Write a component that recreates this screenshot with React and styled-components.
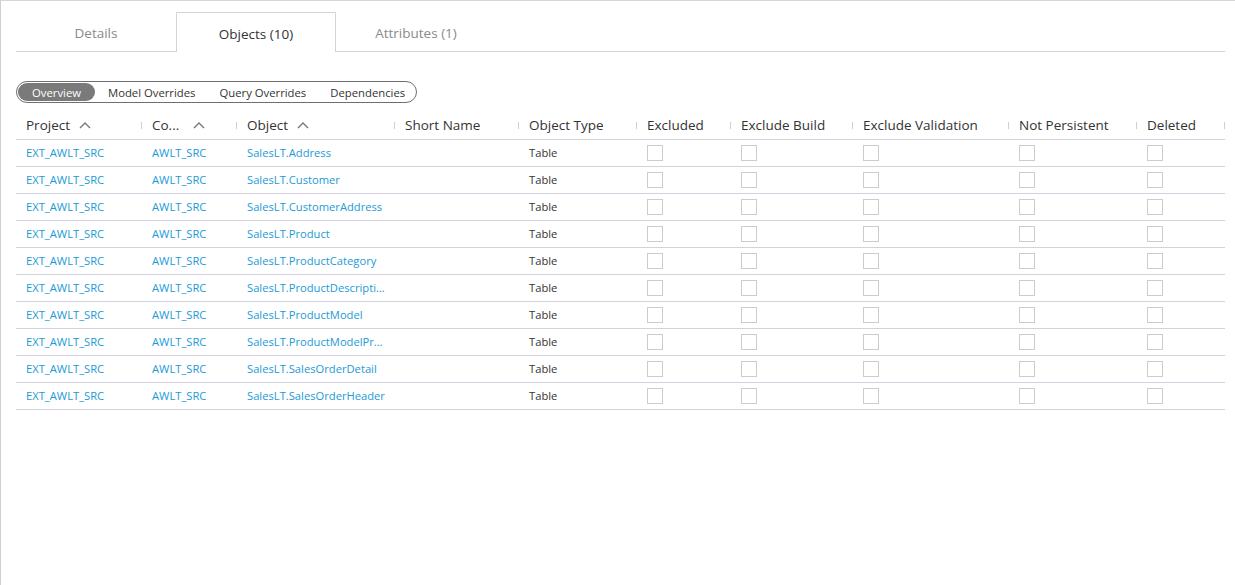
import React from 'react';
import styled, { createGlobalStyle } from 'styled-components';

const GlobalStyle = createGlobalStyle`
  html, body {
    margin: 0;
    padding: 0;
    background: #fff;
  }
  body {
    font-family: "Segoe UI", "Open Sans", "Noto Sans", sans-serif;
  }
`;

const Frame = styled.div`
  box-sizing: border-box;
  height: 585px;
  border-top: 1px solid #d6d6d6;
  border-left: 1px solid #cfcfcf;
  padding: 11px 10px 0 15px;
`;

const TabBar = styled.div`
  display: flex;
  height: 39px;
  border-bottom: 1px solid #d4d4d4;
`;

const Tab = styled.div`
  box-sizing: border-box;
  width: 160px;
  display: flex;
  align-items: center;
  justify-content: center;
  padding-top: 2px;
  font-size: 13.5px;
  color: ${p => (p.$active ? '#333' : '#8a8a8a')};
  background: #fff;
  border: 1px solid ${p => (p.$active ? '#d4d4d4' : 'transparent')};
  border-bottom: none;
  margin-bottom: ${p => (p.$active ? '-1px' : '0')};
  height: ${p => (p.$active ? '40px' : '39px')};
`;

const Segmented = styled.div`
  display: inline-flex;
  align-items: center;
  margin-top: 29px;
  height: 22px;
  box-sizing: border-box;
  border: 1px solid #6f6f6f;
  border-radius: 11px;
  padding: 0 1px;
`;

const Segment = styled.div`
  height: 18px;
  display: flex;
  align-items: center;
  padding: 0 ${p => p.$r}px 0 ${p => p.$l}px;
  border-radius: 9px;
  font-size: 11.3px;
  color: ${p => (p.$active ? '#fff' : '#333')};
  background: ${p => (p.$active ? '#7a7a7a' : 'transparent')};
`;

const Table = styled.div`
  width: 1209px;
  margin-top: 12px;
`;

const Row = styled.div`
  display: grid;
  grid-template-columns: 126px 95px 158px 124px 118px 94px 122px 156px 128px 88px;
  height: ${p => (p.$head ? '24px' : '26px')};
  border-bottom: 1px solid #d3d1df;
  align-items: center;
`;

const HeadCell = styled.div`
  position: relative;
  box-sizing: border-box;
  display: flex;
  align-items: center;
  height: 100%;
  padding: 0 0 4px 10px;
  font-size: 13.5px;
  color: #333;
  white-space: nowrap;

  &::after {
    content: '';
    position: absolute;
    right: 0;
    top: 7px;
    width: 1px;
    height: 7px;
    background: #cfcfcf;
  }
`;

const SortIcon = styled.svg`
  width: 12px;
  height: 8px;
  margin-left: ${p => p.$gap}px;
  stroke: #777;
  fill: none;
  stroke-width: 1.4;
`;

const Cell = styled.div`
  padding: 0 8px 2px 10px;
  font-size: 11.2px;
  color: ${p => (p.$link ? '#1c9ad6' : '#333')};
  white-space: nowrap;
  overflow: hidden;
  text-overflow: ellipsis;
`;

const Box = styled.div`
  margin-left: 10px;
  width: 16px;
  height: 16px;
  box-sizing: border-box;
  border: 1px solid #cccccc;
  background: #fff;
`;

const Sort = ({ gap }) => (
  <SortIcon $gap={gap} viewBox="0 0 12 8">
    <polyline points="1,7 6,2 11,7" />
  </SortIcon>
);

const objects = [
  'SalesLT.Address',
  'SalesLT.Customer',
  'SalesLT.CustomerAddress',
  'SalesLT.Product',
  'SalesLT.ProductCategory',
  'SalesLT.ProductDescription',
  'SalesLT.ProductModel',
  'SalesLT.ProductModelProductDescription',
  'SalesLT.SalesOrderDetail',
  'SalesLT.SalesOrderHeader',
];

export default function App() {
  return (
    <>
      <GlobalStyle />
      <Frame>
        <TabBar>
          <Tab>Details</Tab>
          <Tab $active>Objects (10)</Tab>
          <Tab>Attributes (1)</Tab>
        </TabBar>
        <Segmented>
          <Segment $active $l={14} $r={14}>Overview</Segment>
          <Segment $l={13} $r={12}>Model Overrides</Segment>
          <Segment $l={12} $r={12}>Query Overrides</Segment>
          <Segment $l={12} $r={10}>Dependencies</Segment>
        </Segmented>
        <Table>
          <Row $head>
            <HeadCell>Project<Sort gap={9} /></HeadCell>
            <HeadCell>Co...<Sort gap={14} /></HeadCell>
            <HeadCell>Object<Sort gap={9} /></HeadCell>
            <HeadCell>Short Name</HeadCell>
            <HeadCell>Object Type</HeadCell>
            <HeadCell>Excluded</HeadCell>
            <HeadCell>Exclude Build</HeadCell>
            <HeadCell>Exclude Validation</HeadCell>
            <HeadCell>Not Persistent</HeadCell>
            <HeadCell>Deleted</HeadCell>
          </Row>
          {objects.map(o => (
            <Row key={o}>
              <Cell $link>EXT_AWLT_SRC</Cell>
              <Cell $link>AWLT_SRC</Cell>
              <Cell $link title={o}>{o}</Cell>
              <Cell />
              <Cell>Table</Cell>
              <Box />
              <Box />
              <Box />
              <Box />
              <Box />
            </Row>
          ))}
        </Table>
      </Frame>
    </>
  );
}
